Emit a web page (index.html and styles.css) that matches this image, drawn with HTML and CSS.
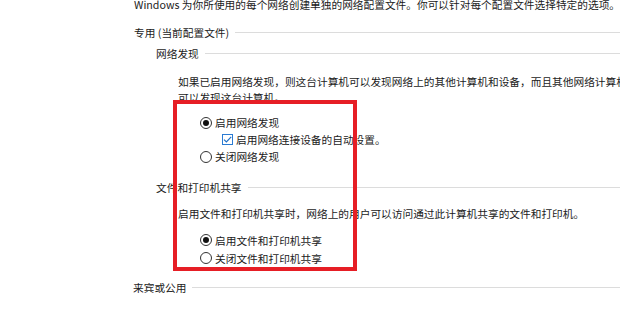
FILE: index.html
```html
<!DOCTYPE html>
<html lang="zh-CN">
<head>
  <meta charset="UTF-8" />
  <title>高级共享设置</title>
  <link rel="stylesheet" href="styles.css">
</head>
<body>
  <div class="page">
    <p class="intro">Windows 为你所使用的每个网络创建单独的网络配置文件。你可以针对每个配置文件选择特定的选项。</p>

    <div class="group-title">
      <span>专用 (当前配置文件)</span>
      <div class="rule"></div>
    </div>

    <div class="sub-title first">
      <span>网络发现</span>
      <div class="rule"></div>
    </div>
    <p class="desc discovery">如果已启用网络发现，则这台计算机可以发现网络上的其他计算机和设备，而且其他网络计算机也<br>可以发现这台计算机。</p>
    <div class="options discovery-opts">
      <label class="opt"><span class="radio checked"></span>启用网络发现</label>
      <label class="opt sub"><span class="check">
        <svg viewBox="0 0 11 11" width="11" height="11"><path d="M2 5.6 L4.4 8 L9.2 2.8" fill="none" stroke="#1f6fc5" stroke-width="1.2"/></svg>
      </span>启用网络连接设备的自动设置。</label>
      <label class="opt"><span class="radio"></span>关闭网络发现</label>
    </div>

    <div class="sub-title share">
      <span>文件和打印机共享</span>
      <div class="rule"></div>
    </div>
    <p class="desc sharing">启用文件和打印机共享时，网络上的用户可以访问通过此计算机共享的文件和打印机。</p>
    <div class="options share-opts">
      <label class="opt"><span class="radio checked"></span>启用文件和打印机共享</label>
      <label class="opt"><span class="radio"></span>关闭文件和打印机共享</label>
    </div>

    <div class="group-title guest">
      <span>来宾或公用</span>
      <div class="rule"></div>
    </div>
  </div>

  <!-- 红框标注 -->
  <div class="highlight"></div>
</body>
</html>
```

FILE: styles.css
```css
body {
  margin: 0;
  background: #fff;
  color: #1b1b1b;
  font-family: "Noto Sans CJK SC", "Noto Sans", sans-serif;
  font-size: 10.7px;
  overflow: hidden;
}

.page {
  padding-left: 134px;
  white-space: nowrap;
}

.intro {
  margin: -3px 0 0 0;
  line-height: 16px;
}

.group-title,
.sub-title {
  display: flex;
  align-items: center;
  height: 16px;
}

.group-title {
  margin-top: 11px;
}

.group-title .rule,
.sub-title .rule {
  flex: 1;
  height: 1px;
  background-color: #dcdcdc;
  margin-left: 6px;
  margin-top: 1px;
}

.sub-title {
  padding-left: 22px;
}

.sub-title.first {
  margin-top: 5px;
}

.sub-title.share {
  margin-top: 14px;
}

.desc {
  margin: 0;
  padding-left: 44px;
  line-height: 16px;
}

.desc.discovery {
  margin-top: 13px;
}

.desc.sharing {
  margin-top: 11px;
}

.options {
  padding-left: 66px;
}

.discovery-opts {
  margin-top: 8px;
}

.share-opts {
  margin-top: 9px;
}

.opt {
  display: flex;
  align-items: center;
  height: 17px;
}

.share-opts .opt {
  height: 18px;
}

.opt.sub {
  padding-left: 22px;
}

.radio {
  width: 10px;
  height: 10px;
  border: 1px solid #333;
  border-radius: 50%;
  margin-right: 3px;
  display: flex;
  align-items: center;
  justify-content: center;
  flex-shrink: 0;
}

.radio.checked::after {
  content: "";
  width: 6px;
  height: 6px;
  border-radius: 50%;
  background-color: #111;
}

.check {
  width: 11px;
  height: 11px;
  border: 1px solid #2a7bd3;
  box-sizing: border-box;
  margin-right: 3px;
  display: flex;
  flex-shrink: 0;
}

.check svg {
  margin: -1px;
}

.group-title.guest {
  margin-top: 12px;
  margin-left: -1px;
}

.highlight {
  position: absolute;
  left: 173px;
  top: 100px;
  width: 176px;
  height: 163px;
  border: 4.5px solid #e61e25;
}
```
